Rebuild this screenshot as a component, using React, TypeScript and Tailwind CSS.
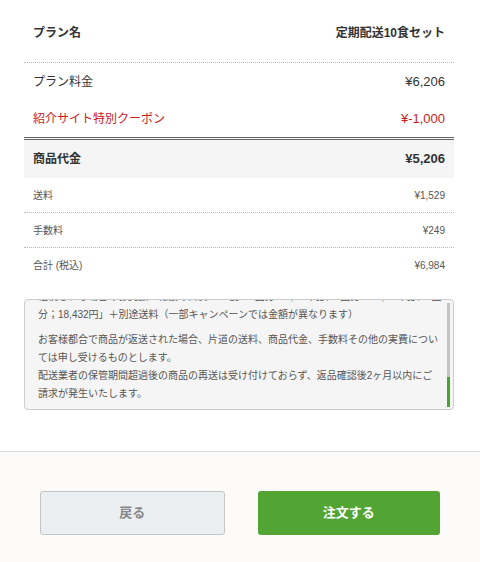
import React from "react";

const font = { fontFamily: '"Liberation Sans", "Noto Sans CJK JP", sans-serif' };

export default function App() {
  return (
    <div className="bg-white text-[#333]" style={font}>
      <div className="pl-[24px] pr-[26px]">
        {/* Plan header */}
        <div className="flex justify-between items-center px-[9px] pt-[24px] pb-[20px] border-b border-dotted border-[#bbb] text-[12px] leading-[18px] font-bold">
          <span>プラン名</span>
          <span>定期配送10食セット</span>
        </div>

        <div className="flex justify-between items-center px-[9px] h-[37px] text-[12px]">
          <span>プラン料金</span>
          <span className="text-[13px]">¥6,206</span>
        </div>
        <div className="flex justify-between items-center px-[9px] h-[37px] text-[12px] text-[#cc2020]">
          <span>紹介サイト特別クーポン</span>
          <span className="text-[13px]">¥-1,000</span>
        </div>

        {/* Subtotal */}
        <div className="flex justify-between items-center px-[9px] h-[41px] border-t-[3px] border-double border-[#666] bg-[#f5f5f5] font-bold">
          <span className="text-[12px]">商品代金</span>
          <span className="text-[13px]">¥5,206</span>
        </div>

        <div className="flex justify-between items-center px-[9px] h-[35px] border-b border-dotted border-[#bbb] text-[10px] text-[#555]">
          <span>送料</span>
          <span>¥1,529</span>
        </div>
        <div className="flex justify-between items-center px-[9px] h-[35px] border-b border-dotted border-[#bbb] text-[10px] text-[#555]">
          <span>手数料</span>
          <span>¥249</span>
        </div>
        <div className="flex justify-between items-center px-[9px] h-[35px] text-[10px] text-[#555]">
          <span>合計 (税込)</span>
          <span>¥6,984</span>
        </div>

        {/* Notes box, scrolled to the end */}
        <div className="relative mt-[16px] mb-[41px] h-[111px] border border-[#ccc] rounded-[4px] bg-[#f5f5f5] overflow-hidden">
          <div className="h-full flex flex-col justify-end px-[13px] pb-[6px] text-[10px] leading-[18px] text-[#555]">
            <p className="whitespace-nowrap">※定期配送は解約のお申し出がない限り、自動的に継続されます。定期配送を3回</p>
            <p>
              <span className="block whitespace-nowrap">
                継続される場合のお支払い総額の目安：10食「1回分：6,206円」、2回分：12,348円」、3回
              </span>
              <span className="block">分；18,432円」＋別途送料（一部キャンペーンでは金額が異なります）</span>
            </p>
            <p className="mt-[7px]">
              お客様都合で商品が返送された場合、片道の送料、商品代金、手数料その他の実費については申し受けるものとします。
              <br />
              配送業者の保管期間超過後の商品の再送は受け付けておらず、返品確認後2ヶ月以内にご請求が発生いたします。
            </p>
          </div>
          <div className="absolute right-[3px] top-[3px] bottom-[2px] w-[3px] bg-[#c4c4c4] flex flex-col justify-end">
            <div className="h-[30px] bg-[#4ca42c]" />
          </div>
        </div>
      </div>

      {/* Footer actions */}
      <div className="border-t border-[#ddd] bg-[#fcfbf9] pt-[39px] pb-[27px]">
        <div className="w-[400px] mx-auto flex gap-[33px]">
          <button className="flex-1 h-[44px] rounded-[3px] border border-[#c5c5c5] bg-[#eceff1] text-[13px] font-bold text-[#888]">
            戻る
          </button>
          <button className="flex-1 h-[44px] rounded-[3px] bg-[#52a433] text-[13px] font-bold text-white">
            注文する
          </button>
        </div>
      </div>
    </div>
  );
}
